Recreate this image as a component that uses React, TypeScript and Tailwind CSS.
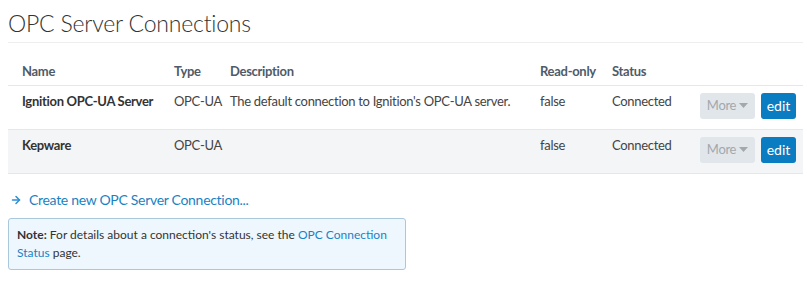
import { ArrowRight } from "lucide-react";

type Connection = {
  name: string;
  type: string;
  description: string;
  readOnly: string;
  status: string;
};

const connections: Connection[] = [
  {
    name: "Ignition OPC-UA Server",
    type: "OPC-UA",
    description: "The default connection to Ignition's OPC-UA server.",
    readOnly: "false",
    status: "Connected",
  },
  {
    name: "Kepware",
    type: "OPC-UA",
    description: "",
    readOnly: "false",
    status: "Connected",
  },
];

export default function App() {
  return (
    <div
      className="bg-white w-[807px] h-[287px] pl-[8px] pr-[4px] text-[#333] tracking-[-0.3px]"
      style={{ fontFamily: "Lato, 'Noto Sans', sans-serif" }}
    >
      <div className="pt-[9px] pb-[5px] border-b border-[#eeeeee]">
        <h1 className="text-[23px] leading-[28px] font-light text-[#333] tracking-[-0.2px]">OPC Server Connections</h1>
      </div>

      <table className="mt-[15px] w-[795px] table-fixed border-collapse text-[13px] whitespace-nowrap">
        <colgroup>
          <col className="w-[158px]" />
          <col className="w-[56px]" />
          <col className="w-[310px]" />
          <col className="w-[72px]" />
          <col className="w-[88px]" />
          <col className="w-[111px]" />
        </colgroup>
        <thead>
          <tr className="h-[27px] border-b border-[#e5e7ea] text-left text-[#4f5b69]">
            <th className="pl-[14px] font-bold">Name</th>
            <th className="pl-[8px] font-bold">Type</th>
            <th className="pl-[8px] font-bold">Description</th>
            <th className="pl-[8px] font-bold">Read-only</th>
            <th className="pl-[8px] font-bold">Status</th>
            <th />
          </tr>
        </thead>
        <tbody>
          {connections.map((c, i) => (
            <tr
              key={c.name}
              className={`h-[44px] border-b border-[#e5e7ea] ${i % 2 === 1 ? "bg-[#f3f5f7]" : "bg-white"}`}
            >
              <td className="pl-[14px] pt-[6px] align-top font-bold text-[#333]">{c.name}</td>
              <td className="pl-[8px] pt-[6px] align-top text-[#444]">{c.type}</td>
              <td className="pl-[8px] pt-[6px] align-top text-[#444]">{c.description}</td>
              <td className="pl-[8px] pt-[6px] align-top text-[#444]">{c.readOnly}</td>
              <td className="pl-[8px] pt-[6px] align-top text-[#444]">{c.status}</td>
              <td className="pr-[7px] pt-[7px] pb-[10px] align-top">
                <div className="flex justify-end gap-[6px]">
                  <button className="flex h-[26px] w-[55px] items-center justify-center gap-[3px] rounded-[3px] bg-[#e1e6eb] text-[13px] text-[#a3a8ad]">
                    More
                    <svg width="9" height="5" viewBox="0 0 9 5">
                      <path d="M0 0h9L4.5 5z" fill="#a3a8ad" />
                    </svg>
                  </button>
                  <button className="h-[26px] w-[35px] rounded-[3px] bg-[#0a7cc1] text-[14px] text-white tracking-normal">edit</button>
                </div>
              </td>
            </tr>
          ))}
        </tbody>
      </table>

      <a className="mt-[17px] flex items-center text-[14px] leading-[18px] text-[#1a82c4]">
        <ArrowRight size={12} strokeWidth={3} className="ml-[2px] mr-[7px] text-[#2d8fd5]" />
        Create new OPC Server Connection...
      </a>

      <div className="mt-[9px] w-[398px] rounded-[3px] border border-[#a9c8de] bg-[#eef7fe] px-[8px] py-[7px] text-[12px] leading-[18px] text-[#333] tracking-normal">
        <span className="font-bold">Note:</span> For details about a connection's status, see the{" "}
        <a className="text-[#1a82c4]">OPC Connection Status</a> page.
      </div>
    </div>
  );
}
